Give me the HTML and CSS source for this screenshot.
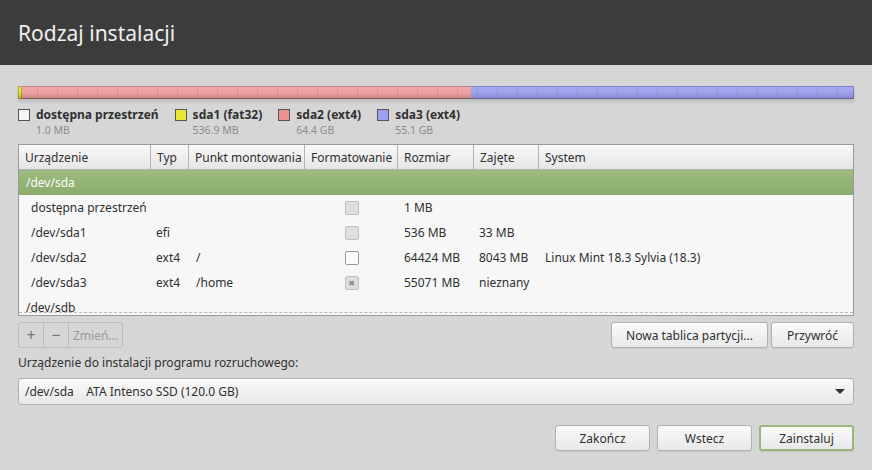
FILE: index.html
```html
<!DOCTYPE html>
<html>
<head>
<meta charset="utf-8">
<title>Rodzaj instalacji</title>
<link rel="stylesheet" href="styles.css">
</head>
<body>

<div class="header"><h1>Rodzaj instalacji</h1></div>

<div class="main">

  <div class="bar">
    <div class="seg seg-fat" style="width:4px"></div>
    <div class="seg seg-ext2" style="width:449px"></div>
    <div class="seg seg-ext3" style="width:383px"></div>
  </div>

  <div class="legend">
    <div class="leg">
      <span class="box box-free"></span>
      <div><div class="leg-name">dostępna przestrzeń</div><div class="leg-size">1.0 MB</div></div>
    </div>
    <div class="leg">
      <span class="box box-fat"></span>
      <div><div class="leg-name">sda1 (fat32)</div><div class="leg-size">536.9 MB</div></div>
    </div>
    <div class="leg">
      <span class="box box-ext2"></span>
      <div><div class="leg-name">sda2 (ext4)</div><div class="leg-size">64.4 GB</div></div>
    </div>
    <div class="leg">
      <span class="box box-ext3"></span>
      <div><div class="leg-name">sda3 (ext4)</div><div class="leg-size">55.1 GB</div></div>
    </div>
  </div>

  <div class="table">
    <div class="row head">
      <div class="c c1">Urządzenie</div>
      <div class="c c2">Typ</div>
      <div class="c c3">Punkt montowania</div>
      <div class="c c4">Formatowanie</div>
      <div class="c c5">Rozmiar</div>
      <div class="c c6">Zajęte</div>
      <div class="c c7">System</div>
    </div>
    <div class="row disk sel">/dev/sda</div>
    <div class="row part">
      <div class="c c1">dostępna przestrzeń</div>
      <div class="c c2"></div>
      <div class="c c3"></div>
      <div class="c c4"><span class="chk dim"></span></div>
      <div class="c c5">1 MB</div>
      <div class="c c6"></div>
      <div class="c c7"></div>
    </div>
    <div class="row part">
      <div class="c c1">/dev/sda1</div>
      <div class="c c2">efi</div>
      <div class="c c3"></div>
      <div class="c c4"><span class="chk dim"></span></div>
      <div class="c c5">536 MB</div>
      <div class="c c6">33 MB</div>
      <div class="c c7"></div>
    </div>
    <div class="row part">
      <div class="c c1">/dev/sda2</div>
      <div class="c c2">ext4</div>
      <div class="c c3">/</div>
      <div class="c c4"><span class="chk"></span></div>
      <div class="c c5">64424 MB</div>
      <div class="c c6">8043 MB</div>
      <div class="c c7">Linux Mint 18.3 Sylvia (18.3)</div>
    </div>
    <div class="row part">
      <div class="c c1">/dev/sda3</div>
      <div class="c c2">ext4</div>
      <div class="c c3">/home</div>
      <div class="c c4"><span class="chk dim x">&#10006;</span></div>
      <div class="c c5">55071 MB</div>
      <div class="c c6">nieznany</div>
      <div class="c c7"></div>
    </div>
    <div class="row disk last">/dev/sdb</div>
  </div>

  <div class="tools">
    <div class="group">
      <span class="tb">+</span><span class="tb">&minus;</span><span class="tb tb-text">Zmień...</span>
    </div>
    <div class="right">
      <span class="btn btn-new">Nowa tablica partycji...</span>
      <span class="btn btn-rev">Przywróć</span>
    </div>
  </div>

  <div class="label">Urządzenie do instalacji programu rozruchowego:</div>
  <div class="combo">
    <span>/dev/sda&nbsp;&nbsp;&nbsp; ATA Intenso SSD (120.0 GB)</span>
    <span class="arrow"></span>
  </div>

  <div class="footer">
    <span class="btn btn-foot">Zakończ</span>
    <span class="btn btn-foot">Wstecz</span>
    <span class="btn btn-foot btn-go">Zainstaluj</span>
  </div>

</div>

</body>
</html>
```

FILE: styles.css
```css
body {
	margin: 0;
	background: #d6d6d6;
	font-family: "Noto Sans", "DejaVu Sans", sans-serif;
	font-size: 12px;
	color: #303030;
	width: 872px;
	height: 470px;
	overflow: hidden;
	white-space: nowrap;
}

.header {
	background: #3c3c3c;
	height: 65px;
	padding-left: 18px;
	box-sizing: border-box;
	display: flex;
	align-items: center;
}

.header h1 {
	margin: 0;
	font-weight: normal;
	font-size: 21px;
	color: #f0f0f0;
}

.main {
	padding: 21px 18px 0 18px;
}

/* partition bar */
.bar {
	display: flex;
	height: 13px;
	box-shadow: 0 3px 3px rgba(0,0,0,0.12);
	position: relative;
}

.bar:after {
	content: "";
	position: absolute;
	left: 0; right: 0; top: 0; bottom: 0;
	background: repeating-linear-gradient(90deg, transparent 0 19px, rgba(90,60,60,0.12) 19px 20px), linear-gradient(rgba(255,255,255,0.1), rgba(0,0,0,0) 50%, rgba(0,0,0,0.18));
}

.seg {
	height: 100%;
	box-sizing: border-box;
}
.seg-fat { background: #e6e03a; border: 1px solid #a8a42a; }
.seg-ext2 { background: #f0a0a0; border-top: 1px solid #c07878; border-bottom: 1px solid #a06a6a; }
.seg-ext3 { background: #9fa3ee; border: 1px solid #7276c8; border-left: none; }

/* legend */
.legend {
	display: flex;
	margin-top: 8px;
	height: 37px;
}

.leg {
	display: flex;
	margin-right: 16px;
}

.box {
	width: 10px;
	height: 10px;
	border: 1px solid #555;
	margin: 2px 6px 0 0;
}
.box-free { background: #f6f6f6; }
.box-fat { background: #e8e832; }
.box-ext2 { background: #f09090; }
.box-ext3 { background: #9ba0f0; }

.leg-name {
	font-weight: bold;
	font-size: 12px;
	line-height: 16px;
}

.leg-size {
	color: #8c8c8c;
	font-size: 10.5px;
	line-height: 14px;
}

/* table */
.table {
	border: 1px solid #9a9a9a;
	background: #f7f7f7;
	height: 170px;
	overflow: hidden;
	position: relative;
}

.table:after {
	content: "";
	position: absolute;
	left: 0; right: 0; bottom: 2px;
	border-bottom: 1px dashed #b8b8b8;
}

.row {
	display: flex;
	height: 25px;
	align-items: center;
}

.head {
	background: linear-gradient(#f8f8f8, #e6e6e6);
	border-bottom: 1px solid #b0b0b0;
	height: 24px;
}

.head .c {
	border-right: 1px solid #b4b4b4;
	height: 100%;
	display: flex;
	align-items: center;
	padding-left: 6px;
}
.head .c7 { border-right: none; }

.c { box-sizing: border-box; overflow: hidden; }
.c1 { width: 132px; }
.c2 { width: 38px; }
.c3 { width: 116px; }
.c4 { width: 93px; }
.c5 { width: 76px; }
.c6 { width: 65px; }
.c7 { flex: 1; }

.disk {
	padding-left: 7px;
}

.sel {
	background: linear-gradient(#9cbb7e, #8cac6e);
	color: #fafafa;
	height: 25px;
}

.part .c1 { padding-left: 12px; }
.part .c2 { padding-left: 5px; }
.part .c3 { padding-left: 7px; }
.part .c4 { display: flex; justify-content: center; }
.part .c5 { padding-left: 6px; }
.part .c6 { padding-left: 5px; }
.part .c7 { padding-left: 6px; }

.chk {
	width: 12px;
	height: 12px;
	border: 1px solid #9a9a9a;
	border-radius: 2px;
	background: #fbfbfb;
	font-size: 8px;
	line-height: 12px;
	text-align: center;
	color: #8a8a8a;
}
.chk.dim {
	background: #dedede;
	border-color: #c0c0c0;
}

/* toolbar */
.tools {
	display: flex;
	justify-content: space-between;
	margin-top: 6px;
}

.group {
	display: flex;
	border: 1px solid #bcbcbc;
	border-radius: 3px;
	height: 24px;
	color: #777;
}

.tb {
	width: 24px;
	display: flex;
	align-items: center;
	justify-content: center;
	border-right: 1px solid #bcbcbc;
	font-size: 16px;
}
.tb-text {
	width: auto;
	padding: 0 4px;
	font-size: 12px;
	color: #9a9a9a;
	border-right: none;
}

.right {
	display: flex;
	gap: 3px;
}

.btn {
	display: flex;
	align-items: center;
	justify-content: center;
	height: 26px;
	box-sizing: border-box;
	border: 1px solid #b0b0b0;
	border-radius: 3px;
	background: linear-gradient(#fafafa, #e8e8e8);
	box-shadow: 0 1px 0 rgba(0,0,0,0.06);
}
.btn-new { width: 157px; }
.btn-rev { width: 83px; }

.label {
	margin-top: 4px;
	height: 22px;
	line-height: 22px;
}

.combo {
	margin-top: 4px;
	height: 27px;
	box-sizing: border-box;
	border: 1px solid #b0b0b0;
	border-radius: 3px;
	background: linear-gradient(#fafafa, #e8e8e8);
	display: flex;
	align-items: center;
	justify-content: space-between;
	padding: 0 8px 0 6px;
}

.arrow {
	width: 0;
	height: 0;
	border-left: 5px solid transparent;
	border-right: 5px solid transparent;
	border-top: 5px solid #303030;
}

.footer {
	display: flex;
	justify-content: flex-end;
	gap: 7px;
	margin-top: 20px;
}

.btn-foot { width: 95px; }

.btn-go {
	border: 2px solid #9ab87c;
}
```
